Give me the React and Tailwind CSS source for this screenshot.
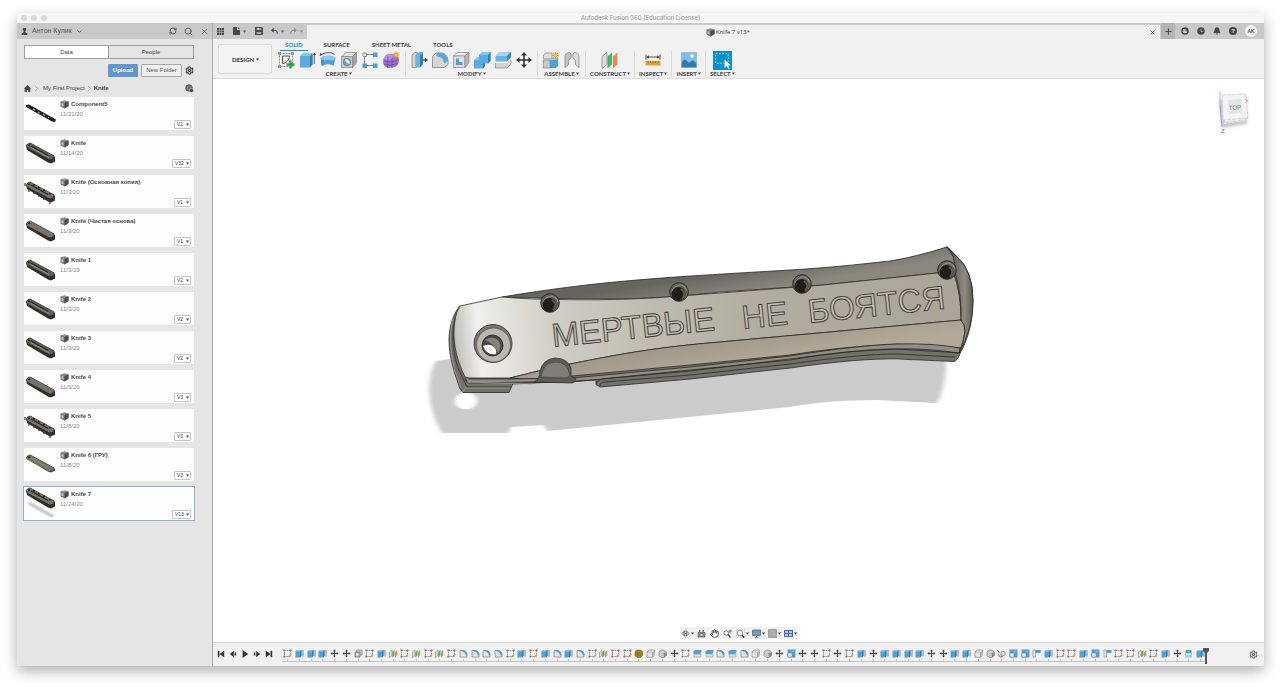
import React from "react";
import { Bell, ChevronDown, ChevronRight, Hand, Plus, RefreshCw, Search, Settings, X } from "lucide-react";

const Caret = ({ className = "" }) => (
  <svg viewBox="0 0 4 3" className={`h-[3px] w-[3px] shrink-0 ${className}`} aria-hidden="true">
    <path d="M0 0h4L2 3z" fill="currentColor" />
  </svg>
);

const Svg = ({ children, className = "size-[18px]", box = "0 0 18 18" }) => (
  <svg viewBox={box} className={`shrink-0 ${className}`} aria-hidden="true" fill="none">
    {children}
  </svg>
);

const Star = ({ x, y }) => (
  <g transform={`translate(${x} ${y})`} stroke="#f29a1f" strokeWidth="1.2">
    <path d="M0-3.6V3.6M-3.6 0H3.6M-2.4-2.4L2.4 2.4M-2.4 2.4L2.4-2.4" />
    <circle r="1.4" fill="#ffc34d" stroke="none" />
  </g>
);

const MovePath = () => (
  <>
    <path d="M9 3v12M3 9h12" stroke="#333" strokeWidth="1.6" />
    <path d="M9 1l3 3.6H6zM9 17l3-3.6H6zM1 9l3.6-3v6zM17 9l-3.6-3v6z" fill="#333" />
  </>
);

/* Toolbar drawings */
const tools = {
  sketch: (
    <Svg>
      <path d="M2.5 2.5h13v13h-13z" stroke="#8a8a8a" strokeDasharray="2 1" />
      <path d="M1 1h3v3H1zM14 1h3v3h-3zM1 14h3v3H1z" fill="#999" />
      <path d="M5.5 5h7c0 4-3 7-7 7.500z" stroke="#444" strokeWidth=".9" />
      <path d="M13.500 9.500v8M9.500 13.500h8" stroke="#2ea043" strokeWidth="2.400" />
    </Svg>
  ),
  extrude: (
    <Svg>
      <path d="M13 3.500h2.500v9L13 16z" fill="#b5b5b5" />
      <path d="M2 5l3-3h9.500L12 5z" fill="#8cc6ee" />
      <path d="M2 5h10v11.500H2z" fill="#5aa9e0" />
      <path d="M12 5l2.500-3v11L12 16.500z" fill="#2f7fb8" />
      <path d="M16.500 4v9" stroke="#555" strokeWidth=".8" />
      <path d="M16.500 1.500l1.300 2.500h-2.600z" fill="#333" />
    </Svg>
  ),
  revolve: (
    <Svg>
      <path d="M1.500 7C4 3.500 14 3.500 16.500 7l-2 8c-3-2.500-8-2.500-11 0z" fill="#4f9fd8" />
      <path d="M1.500 7C4 3.500 14 3.500 16.500 7c-1 2-3 2.500-4 2.500-2-1-5-1-7 0-2 0-3.500-1-4-2.500z" fill="#8cc6ee" />
      <path d="M2 11.500c0-2 1-3 3-2.500l-1.500 6c-1-.5-1.500-2-1.500-3.500z" fill="#3a86bd" />
      <path d="M2 4C5 1 13 1 15.500 3.500" stroke="#444" strokeWidth=".9" />
      <path d="M0.500 5l1-3 2 1.800z" fill="#333" />
    </Svg>
  ),
  hole: (
    <Svg>
      <path d="M1.500 5.500L6 1.500h10.500l-4 4z" fill="#e2e2e2" stroke="#888" strokeWidth=".7" />
      <path d="M1.500 5.500h11v11h-11z" fill="#c9c9c9" stroke="#888" strokeWidth=".7" />
      <path d="M12.500 5.500l4-4v10.500l-4 4.500z" fill="#a4a4a4" stroke="#888" strokeWidth=".7" />
      <circle cx="7" cy="11" r="3.800" fill="#5aa9e0" stroke="#777" strokeWidth=".7" />
      <path d="M5 8.500a3.500 3.500 0 0 1 4.500 4.500A6 6 0 0 1 5 8.500z" fill="#e9e9e9" />
    </Svg>
  ),
  pattern: (
    <Svg>
      <path d="M5 3.500h7M3.500 5v8M5 14.500h7" stroke="#777" strokeWidth=".9" />
      <path d="M2 2h3.500v3.500H2z" fill="#f4f4f4" stroke="#777" strokeWidth=".8" />
      <path d="M12 1.500h4.500V6H12zM12 12.500h4.500V17H12zM1.500 12.500H6V17H1.500z" fill="#4f9fd8" />
    </Svg>
  ),
  form: (
    <Svg>
      <path d="M1.500 8q1-4 5-5l6 0q4 1 4.500 6 0 5-4 7l-6 1q-5-1-6-5z" fill="#9b6fd0" />
      <path d="M1.500 8q1-4 5-5l6 0-3 5q-4 1.500-8 0z" fill="#b795e2" />
      <path d="M6 5l-.5 12M10 7.500V17M1.500 9.500c4 2 11 2 14.500-1M2 13c4 1.500 10 1.500 14-1" stroke="#6f45a3" strokeWidth=".7" />
      <Star x={14} y={4} />
    </Svg>
  ),
  pressPull: (
    <Svg>
      <path d="M2 4l3-2.500h3L6 4v12.500H2z" fill="#d5d5d5" stroke="#777" strokeWidth=".7" />
      <path d="M6 4l3-3h4l-3 3v12.500H6z" fill="#68b3e8" />
      <path d="M10 4l3-3v12l-3 3.500z" fill="#2f7fb8" />
      <path d="M12.500 9H15" stroke="#333" />
      <path d="M18 9l-3-2v4z" fill="#333" />
    </Svg>
  ),
  fillet: (
    <Svg>
      <path d="M1.500 5.500L5 2h5c4 0 7 4 7 8v3.500l-4 3H1.500z" fill="#d6d6d6" stroke="#888" strokeWidth=".8" />
      <path d="M5 2h5c4 0 7 4 7 8l-4 2.500c0-4-3-7-7-7z" fill="#5aa9e0" />
    </Svg>
  ),
  shell: (
    <Svg>
      <path d="M1.500 5L5 1.500h12L13 5z" fill="#eee" stroke="#888" strokeWidth=".7" />
      <path d="M1.500 5H13v11.500H1.500z" fill="#dedede" stroke="#888" strokeWidth=".7" />
      <path d="M13 5l4-3.500V12l-4 4.500z" fill="#b6b6b6" stroke="#888" strokeWidth=".7" />
      <path d="M4 7.500h6.500V14H4z" fill="#4f9fd8" />
      <path d="M7 7.500h3.500V11H7z" fill="#fff" />
    </Svg>
  ),
  combine: (
    <Svg>
      <path d="M6 4l3-3h8.500v9L15 12.500h-3V15l-2 2.500H1V9l3-2.500h2z" fill="#5aa9e0" />
      <path d="M6 4l3-3h8.500L15 4zM1 9l3-2.500h2V9z" fill="#8cc6ee" />
      <path d="M15 4l2.500-3v9L15 12.500zM10 12.500h2V15l-2 2.500z" fill="#2f7fb8" />
    </Svg>
  ),
  split: (
    <Svg>
      <path d="M1.500 12l3-3h12.500v4l-4 4H1.500z" fill="#d3d3d3" stroke="#888" strokeWidth=".7" />
      <path d="M1.500 5l4-4H17v5l-4 4.500H1.500z" fill="#68b3e8" />
      <path d="M1.500 5l4-4H17l-4 4z" fill="#a3d3f3" />
      <path d="M13 5l4-4v5l-4 4.500z" fill="#3a86bd" />
      <path d="M1 11.300h12L17.500 7" stroke="#fff" strokeWidth="1.200" />
    </Svg>
  ),
  move: <Svg><MovePath /></Svg>,
  component: (
    <Svg>
      <path d="M1.500 4L4 2h6v6H1.500z" fill="#ddd" stroke="#888" strokeWidth=".7" />
      <path d="M1.500 9H8v8H1.500z" fill="#c9c9c9" stroke="#888" strokeWidth=".7" />
      <path d="M8 9l2-2h6v8l-2 2H8z" fill="#4f9fd8" />
      <path d="M8 9l2-2h6l-2 2z" fill="#8cc6ee" />
      <Star x={13.500} y={4.500} />
    </Svg>
  ),
  joint: (
    <Svg>
      <path d="M2 6c0-3 2-4.500 4-4.500S8.500 4 8 7L5.500 9v4.500L2 16.500z" fill="#c3c3c3" stroke="#888" strokeWidth=".8" />
      <path d="M16 6c0-3-2-4.500-4-4.500S9.500 4 10 7l2.500 2v4.500l3.500 3z" fill="#dcdcdc" stroke="#888" strokeWidth=".8" />
    </Svg>
  ),
  plane: (
    <Svg>
      <path d="M1 5.500l5-4v12l-5 4z" fill="#ddd" stroke="#888" strokeWidth=".8" />
      <path d="M6.500 5.500l4.500-4v12l-4.500 4z" fill="#3fb56c" />
      <path d="M12 5.500l4.500-4v12l-4.500 4z" fill="#e58b52" />
    </Svg>
  ),
  measure: (
    <Svg>
      <path d="M2 3.500v5M16 3.500v5M3 6h12" stroke="#444" strokeWidth=".9" />
      <path d="M2 6l3-1.500v3zM16 6l-3-1.500v3z" fill="#444" />
      <path d="M1.500 10h15v4.500h-15z" fill="#e3a22d" />
      <path d="M4 10v2M6.500 10v2M9 10v2M11.500 10v2M14 10v2" stroke="#8a5d0c" strokeWidth=".7" />
    </Svg>
  ),
  insert: (
    <Svg>
      <path d="M1.500 1.500h15v15h-15z" fill="#7fbdea" />
      <path d="M1.500 12c2-4 4-4 6-1.500 2 3 3-1 5-1 2 .5 2.500 2 4 3v4h-15z" fill="#2c7ab0" />
      <circle cx="12" cy="5" r="1.800" fill="#f6fbff" />
      <path d="M1.500 1.500h15v15h-15z" stroke="#8aa" strokeWidth=".6" />
    </Svg>
  ),
  select: (
    <Svg className="size-[19px]">
      <path d="M0 0h18v18H0z" fill="#0a8fd0" />
      <path d="M2.500 2.500h12v9h-12z" stroke="#9ed08e" strokeDasharray="2 1" strokeWidth=".9" />
      <path d="M11 8v8l2-1.700 1.300 2.700 1.300-.7-1.300-2.500h2.700z" fill="#fff" />
    </Svg>
  ),
};

/* Timeline drawings, one per feature kind */
const features = {
  s: (
    <>
      <path d="M3 3h12v12H3z" stroke="#7c7c7c" strokeDasharray="3 1.200" strokeWidth="1.500" />
      <path d="M1 1h3.500v3.500H1zM13.500 1H17v3.500h-3.500zM1 13.500h3.500V17H1z" fill="#777" />
      <path d="M9.500 16.500l5.500-6.500 2.500 2-6 5z" fill="#f08a3c" />
    </>
  ),
  e: (
    <>
      <path d="M1 5l3-3h9v11l-3 4H1z" fill="#4f9fd8" />
      <path d="M1 5l3-3h9l-3 3z" fill="#8cc6ee" />
      <path d="M13 2v11l-3 4V5z" fill="#2f7fb8" />
      <path d="M16 2v13" stroke="#777" strokeWidth="1.800" />
    </>
  ),
  m: <MovePath />,
  k: (
    <>
      <path d="M5 2h11v10H5z" fill="#cfd6da" stroke="#777" strokeWidth="1.300" />
      <path d="M2 6h10v10H2z" fill="#a8b7c0" stroke="#666" strokeWidth="1.300" />
      <path d="M5 9h4v4H5z" fill="#fff" />
    </>
  ),
  p: (
    <>
      <path d="M1 6l5-4v11l-5 4z" fill="#ddd" stroke="#777" />
      <path d="M6.500 6L11 2v11l-4.500 4z" fill="#3fb56c" />
      <path d="M12 6l4.500-4v11L12 17z" fill="#e58b52" />
    </>
  ),
  f: (
    <>
      <path d="M2 3h6c5 0 8 4 8 8v5H2z" fill="#e4e4e4" stroke="#777" strokeWidth="1.300" />
      <path d="M5 2c7 0 11 4 12 10l-3.500 1C13 8 10 5 5 5z" fill="#4f9fd8" />
    </>
  ),
  g: (
    <>
      <path d="M2 5l4-3h7l4 3v8l-4 4H6l-4-4z" fill="#a98a2c" stroke="#6e5918" />
      <path d="M2 8h15M2 12h15M7 3v14M12 3v14" stroke="#7c651c" />
    </>
  ),
  b: (
    <>
      <path d="M2 6l4-4h11v10l-4 4.500H2z" fill="#e6e6e6" stroke="#777" strokeWidth="1.200" />
      <path d="M13 6l4-4v10l-4 4.500z" fill="#bbb" />
      <path d="M2 6h11v10" stroke="#888" />
    </>
  ),
  r: (
    <>
      <path d="M2 7c1-4 4-5 7-5s7 2 8 5v6l-5 4H6l-4-4z" fill="#c6c9cd" stroke="#777" strokeWidth="1.200" />
      <path d="M11 8l6-1v6l-5 4z" fill="#85898e" />
    </>
  ),
  t: (
    <>
      <path d="M2 10h14v6H2z" fill="#ddd" stroke="#888" />
      <path d="M1 5l3-3h13v4l-3 3H1z" fill="#4f9fd8" />
      <path d="M1 9h14" stroke="#2f7fb8" />
    </>
  ),
  c: (
    <>
      <path d="M1 1h16v16H1z" fill="#4f9fd8" />
      <path d="M2 8h8v8H2z" fill="#e9e9e9" stroke="#777" />
      <path d="M10 7l4-4" stroke="#fff" strokeWidth="1.200" />
    </>
  ),
  l: (
    <>
      <path d="M2 2h5v14H2z" fill="#f1f1f1" stroke="#777" strokeWidth="1.200" />
      <path d="M7 2h10v6H7z" fill="#4f9fd8" />
    </>
  ),
  x: (
    <>
      <circle cx="12" cy="9" r="4.500" fill="#e4e4e4" stroke="#777" strokeWidth="1.300" />
      <path d="M4 10l5 2v4H5l-3-3z" fill="#ddd" stroke="#888" />
      <path d="M1 2l4 6M3 13q4 5 8 2" stroke="#dc4453" strokeWidth="2" />
    </>
  ),
  d: (
    <>
      <path d="M3 2h12v6H3z" fill="#4f9fd8" />
      <path d="M3 8h12v8H3z" fill="#e9f2f8" stroke="#6d9fc2" />
      <path d="M3 12h12v4H3z" fill="#a8cde8" />
    </>
  ),
};

const timeline =
  "seeemmkseps" + "pspsffffsesefe" + "fspssgbrmsttftfbrmcmmsms" + "emeeee" + "mmeebrxccle" + "sseclsspsemde";

const toolGroups = [
  { name: "CREATE", pad: "px-[5px]", icons: ["sketch", "extrude", "revolve", "hole", "pattern", "form"] },
  { name: "MODIFY", pad: "px-1", icons: ["pressPull", "fillet", "shell", "combine", "split", "move"] },
  { name: "ASSEMBLE", pad: "px-1", icons: ["component", "joint"] },
  { name: "CONSTRUCT", pad: "px-1", icons: ["plane"] },
  { name: "INSPECT", pad: "px-1", icons: ["measure"] },
  { name: "INSERT", pad: "px-1", icons: ["insert"] },
  { name: "SELECT", pad: "px-1", icons: ["select"] },
];

const files = [
  { name: "Component5", date: "11/21/20", version: "V2", kind: "blade" },
  { name: "Knife", date: "11/14/20", version: "V32", kind: "slots" },
  { name: "Knife (Основная копия)", date: "11/3/20", version: "V1", kind: "pegs" },
  { name: "Knife (Чистая основа)", date: "11/3/20", version: "V1", kind: "plain" },
  { name: "Knife 1", date: "11/3/20", version: "V2", kind: "slots" },
  { name: "Knife 2", date: "11/3/20", version: "V2", kind: "slots" },
  { name: "Knife 3", date: "11/3/20", version: "V2", kind: "slots" },
  { name: "Knife 4", date: "11/3/20", version: "V3", kind: "plain" },
  { name: "Knife 5", date: "11/8/20", version: "V3", kind: "pegs" },
  { name: "Knife 6 (ГРУ)", date: "11/8/20", version: "V3", kind: "thin" },
  { name: "Knife 7", date: "11/24/20", version: "V13", kind: "shadow", selected: true },
];

const Thumb = ({ kind }) => {
  if (kind === "blade") {
    return (
      <Svg className="h-8 w-[33px]" box="0 0 33 32">
        <path d="M2 8l3-.5 27 15-1 2.500-3-.5L2 10z" fill="#23211e" />
        <path d="M9 12l2 1M14 15l1.500 1M19 17.500l2 1M24 20.500l1 .5" stroke="#c9b98a" strokeWidth="1.200" />
      </Svg>
    );
  }
  const up = kind === "shadow" ? -6 : 0;
  const depth = kind === "thin" ? 2 : 5;
  return (
    <Svg className="h-8 w-[33px]" box="0 0 33 32">
      {kind === "shadow" && <path d="M4 16l3-1 23 13-1 2-3 0L5 18z" fill="#cfcfcf" />}
      <g transform={`translate(0 ${up})`}>
        <path d={`M2 10l1-2 3-1.500L30 19.500l1 2v${depth - 1}l-4 2-3-1L3 ${9 + depth}z`} fill="#2f2e2a" />
        <path d="M2.500 9.500l3.500-2.500 24 13-1.500 3-3 .5L3 11.500z" fill={kind === "slots" ? "#625f56" : "#77736a"} />
        {kind !== "plain" && <path d="M7 10l17 9.500" stroke={kind === "thin" ? "#8d897d" : "#24231f"} strokeWidth="1.400" />}
        {kind === "slots" && <path d="M7 11.500l18 10" stroke="#b5b1a3" strokeWidth=".7" />}
        <circle cx="5" cy="9.300" r="1" fill="#1d1c1a" />
        {(kind === "pegs" || kind === "shadow") && (
          <path d="M10 9v1.500M15 12v1.500M20 14.500V16M26 18v1.500" stroke="#111" strokeWidth="1.500" />
        )}
        {kind === "pegs" && <path d="M1 8v3M5 14v3M10 16v3M15 19v3M20 22v3M26 25v4" stroke="#3a3934" strokeWidth="1.200" />}
      </g>
    </Svg>
  );
};

const Cube = ({ className = "size-[9px]" }) => (
  <Svg className={className}>
    <path d="M1 3l8-2 8 2v9l-8 5-8-4z" fill="#777" />
    <path d="M1 3l8-2 8 2-8 3z" fill="#8f8f8f" />
    <path d="M9 6l8-3v9l-8 5z" fill="#4c4c4c" />
    <path d="M3 6l4 1v6l-4-1.500z" fill="#c0c0c0" />
  </Svg>
);

const FileCard = ({ file }) => (
  <li
    className={`flex h-[33px] items-start bg-[#fdfdfd] ${
      file.selected ? "outline outline-1 outline-[#8fafd3]" : ""
    }`}
  >
    <Thumb kind={file.kind} />
    <div className="ml-[3px] flex min-w-0 flex-1 flex-col pt-0.5">
      <a href="#file" className="flex items-center gap-0.5 text-[6px] leading-[10px] font-bold text-[#4a4a4a]">
        <Cube />
        {file.name}
      </a>
      <span className="text-[6px] leading-[10px] text-[#8a8a8a]">{file.date}</span>
    </div>
    <span className="relative mr-[3px] mb-px flex self-end text-[#444]">
      <select
        aria-label={`Version of ${file.name}`}
        className="h-[9px] appearance-none rounded-[1px] border border-[#c4c4c4] bg-white pr-[6px] pl-0.5 text-[5px] leading-[7px]"
      >
        <option>{file.version}</option>
      </select>
      <Caret className="pointer-events-none absolute top-[3px] right-0.5" />
    </span>
  </li>
);

const Sidebar = () => (
  <aside className="flex w-[196px] shrink-0 flex-col border-r border-[#ababab] bg-[#e5e5e5]">
    <header className="flex h-4 items-center bg-[#c9c9c9] pr-[3px] pl-1 text-[#555]">
      <Svg className="size-[7px]" box="0 0 10 10">
        <path d="M5 0a2 2 0 0 1 1 4l1 3h2v3H1V7h2l1-3A2 2 0 0 1 5 0z" fill="#444" />
      </Svg>
      <button className="ml-1 flex items-center gap-1 text-[7px] leading-4">
        Антон Кулик
        <ChevronDown className="size-[7px]" strokeWidth={3} />
      </button>
      <div className="ml-auto flex items-center gap-[7px]">
        <button aria-label="Refresh"><RefreshCw className="block size-2" strokeWidth={3} /></button>
        <button aria-label="Search"><Search className="block size-[9px]" strokeWidth={2.500} /></button>
        <button aria-label="Close panel"><X className="block size-[9px]" strokeWidth={2} /></button>
      </div>
    </header>
    <div className="flex flex-1 flex-col pt-1.5 pr-[18px] pl-[7px]">
      <div className="grid h-[14px] grid-cols-2 border border-[#9f9f9f] text-[6px] text-[#444]">
        <button className="border-r border-[#9f9f9f] bg-white">Data</button>
        <button>People</button>
      </div>
      <div className="mt-[5px] flex items-center justify-end text-[6px]">
        <button className="h-[13px] w-[30px] rounded-[1px] bg-[#6595c9] font-bold text-white">Upload</button>
        <button className="ml-[3px] h-[13px] w-[41px] rounded-[1px] border border-[#a9a9a9] bg-[#eee] text-[#555]">New Folder</button>
        <button aria-label="Panel settings" className="ml-[3px] text-[#444]">
          <Settings className="block size-[9px]" strokeWidth={3} />
        </button>
      </div>
      <nav className="flex h-5 items-center pt-[3px] text-[6px] text-[#444]">
        <a href="#home" aria-label="Home">
          <Svg className="size-[7px]" box="0 0 10 10">
            <path d="M5 0l5 5H9v5H6V7H4v3H1V5H0z" fill="#444" />
          </Svg>
        </a>
        <ChevronRight className="mx-px size-[9px] text-[#999]" strokeWidth={2} />
        <a href="#project" className="ml-px">My First Project</a>
        <ChevronRight className="size-[9px] text-[#999]" strokeWidth={2} />
        <a href="#knife" className="font-bold">Knife</a>
        <button aria-label="Open on the web" className="ml-auto">
          <Svg className="size-[9px]">
            <circle cx="8" cy="8" r="6.500" fill="#8a8a8a" stroke="#444" strokeWidth="1.600" />
            <path d="M1 8h14M8 1v14M3 4h10M3 12h8" stroke="#555" />
            <path d="M9 11l4-2 4 2v4l-4 2-4-2z" fill="#444" stroke="#e5e5e5" />
          </Svg>
        </button>
      </nav>
      <ul className="flex flex-col gap-1.5">
        {files.map((f) => (
          <FileCard key={f.name} file={f} />
        ))}
      </ul>
    </div>
  </aside>
);

const TopBar = () => (
  <div className="flex h-4 items-stretch bg-[#c9c9c9] text-[#4a4a4a]">
    <div className="flex w-[94px] shrink-0 items-center pl-1">
      <button aria-label="Data panel">
        <Svg className="block size-[7px]" box="0 0 11 11">
          <path d="M0 0h3v3H0zM4 0h3v3H4zM8 0h3v3H8zM0 4h3v3H0zM4 4h3v3H4zM8 4h3v3H8zM0 8h3v3H0zM4 8h3v3H4zM8 8h3v3H8z" fill="#444" />
        </Svg>
      </button>
      <button aria-label="File" className="ml-[9px] flex items-center gap-[3px]">
        <Svg className="h-2 w-[7px]" box="0 0 7 8">
          <path d="M0 0h4v3h3v5H0zM5 0l2 2H5z" fill="#4a4a4a" />
        </Svg>
        <Caret />
      </button>
      <button aria-label="Save" className="ml-[9px]">
        <Svg className="block size-2" box="0 0 9 9">
          <path d="M0 0h8l1 1v8H0z" fill="#4a4a4a" />
          <path d="M2 1h5v2.500H2zM2 5.500h5V8H2z" fill="#c9c9c9" />
          <path d="M3 6.700h3M5.500 1v2" stroke="#4a4a4a" strokeWidth=".8" />
        </Svg>
      </button>
      <button aria-label="Undo" className="ml-2 flex items-center gap-[3px]">
        <Svg className="h-2 w-[7px]" box="0 0 10 10">
          <path d="M2 4h3c3 0 4 2 4 5" stroke="#4a4a4a" strokeWidth="1.600" />
          <path d="M0 4l4-3.500v7z" fill="#4a4a4a" />
        </Svg>
        <Caret />
      </button>
      <button aria-label="Redo" className="ml-1.5 flex items-center gap-[3px] text-[#888]">
        <Svg className="h-2 w-[7px]" box="0 0 10 10">
          <path d="M8 4H5C2 4 1 6 1 9" stroke="#888" strokeWidth="1.400" />
          <path d="M10 4L6 .5v7z" fill="#888" />
        </Svg>
        <Caret />
      </button>
    </div>
    <div className="mt-0.5 flex flex-1 items-center bg-[#f1f1f1] pr-1">
      <span className="flex flex-1 items-center justify-center gap-px font-['Open_Sans',sans-serif] text-[6px] font-medium text-[#333]">
        <Cube className="size-[9px]" />
        Knife 7 v13*
      </span>
      <button aria-label="Close tab"><X className="block size-[7px]" strokeWidth={2.500} /></button>
    </div>
    <button aria-label="New tab" className="ml-px flex w-[14px] items-center justify-center bg-[#b4b4b4]">
      <Plus className="size-[9px]" strokeWidth={3} />
    </button>
    <div className="flex items-center gap-2 pr-[7px] pl-1.5">
      <button aria-label="Extensions">
        <Svg className="block size-2">
          <circle cx="9" cy="9" r="7" stroke="#444" strokeWidth="3" />
          <path d="M4 2l9 0 3 8-5 0z" fill="#444" />
          <path d="M5 6l6 0 0 5" stroke="#ddd" strokeWidth="1.600" />
        </Svg>
      </button>
      <button aria-label="Job status">
        <Svg className="block size-2">
          <circle cx="9" cy="9" r="8.500" fill="#4a4a4a" />
          <path d="M9 4v6h5" stroke="#c9c9c9" strokeWidth="1.600" />
        </Svg>
      </button>
      <button aria-label="Notifications"><Bell className="block size-2" fill="#444" strokeWidth={3} /></button>
      <button aria-label="Help" className="flex size-2 items-center justify-center rounded-full bg-[#444] text-[6px] leading-none font-bold text-[#eee]">?</button>
      <button aria-label="Account" className="flex size-3 items-center justify-center rounded-full bg-[#f1f1f1] text-[5px] leading-none font-bold text-[#555]">AK</button>
    </div>
  </div>
);

const tabs = ["SOLID", "SURFACE", "SHEET METAL", "TOOLS"];

const Ribbon = () => (
  <div className="flex h-10 items-start border-b border-[#dcdcdc] bg-[#f1f1f1] pl-[5px] font-['Lato',sans-serif] text-[6px] font-bold text-[#444]">
    <span className="relative mt-[5px] flex">
      <select
        aria-label="Workspace"
        className="h-[30px] w-[54px] appearance-none rounded-[2px] border border-[#dadada] bg-[#f3f3f3] pl-[13px] font-black"
      >
        <option>DESIGN</option>
      </select>
      <Caret className="pointer-events-none absolute top-[14px] right-[13px]" />
    </span>
    <div className="flex flex-col">
      <div className="ml-2 flex h-3 items-stretch gap-[22px]">
        {tabs.map((t, i) => (
          <button
            key={t}
            className={
              i === 0
                ? "-mr-[6px] border-b border-[#0696d7] px-[5px] pb-px text-[#0696d7]"
                : "border-b border-transparent pb-px"
            }
          >
            {t}
          </button>
        ))}
      </div>
      <div className="flex">
        {toolGroups.map((g, i) => (
          <div
            key={g.name}
            className={`flex flex-col items-center ${g.pad} ${i < toolGroups.length - 1 ? "border-r border-[#dcdcdc]" : ""}`}
          >
            <div className="flex h-[18px] items-center gap-[3px]">
              {g.icons.map((n) => (
                <button key={n} aria-label={n}>{tools[n]}</button>
              ))}
            </div>
            <button className="flex h-2 items-center gap-px pt-px leading-[8px] whitespace-nowrap">
              {g.name}
              <Caret />
            </button>
          </div>
        ))}
      </div>
    </div>
  </div>
);

const screws = [
  [550, 303],
  [679, 292],
  [802, 284],
  [947, 270],
];

const Model = () => (
  <svg viewBox="213 79 1051 563" className="block w-full" role="img" aria-label="Knife handle model">
    <defs>
      <linearGradient id="face" gradientUnits="userSpaceOnUse" x1="454" y1="350" x2="962" y2="300">
        <stop offset="0" stopColor="#bdbbb5" />
        <stop offset=".05" stopColor="#f1f0ee" />
        <stop offset=".1" stopColor="#e6e4df" />
        <stop offset=".2" stopColor="#d0cdc5" />
        <stop offset=".4" stopColor="#bfbbb0" />
        <stop offset=".6" stopColor="#b1ada1" />
        <stop offset="1" stopColor="#aaa598" />
      </linearGradient>
      <linearGradient id="upper" gradientUnits="userSpaceOnUse" x1="720" y1="272" x2="724" y2="296">
        <stop offset="0" stopColor="#66645e" />
        <stop offset="1" stopColor="#8a877f" />
      </linearGradient>
      <linearGradient id="tan" gradientUnits="userSpaceOnUse" x1="740" y1="338" x2="744" y2="364">
        <stop offset="0" stopColor="#a1998b" />
        <stop offset="1" stopColor="#b4a998" />
      </linearGradient>
      <linearGradient id="cap" gradientUnits="userSpaceOnUse" x1="952" y1="300" x2="973" y2="300">
        <stop offset="0" stopColor="#625f58" />
        <stop offset=".6" stopColor="#8d8a82" />
        <stop offset="1" stopColor="#5d5a54" />
      </linearGradient>
      <filter id="soft" x="-5%" y="-10%" width="110%" height="120%">
        <feGaussianBlur stdDeviation="2 0.5" />
      </filter>
    </defs>

    <g filter="url(#soft)">
      <path d="M436 361l80-12 430 12v8q-2 22-9 34-40-2-60-3-50 0-87 7L547 431l-3-6-33 2-3 6h-66q-12-20-13-43 1-20 7-29z" fill="#cbcbcb" />
      <ellipse cx="466" cy="401" rx="11" ry="8.500" fill="#fff" />
    </g>

    <g stroke="#2b2a27" strokeWidth=".8" strokeLinejoin="round">
      <path d="M460 306c-6 6-11 20-11 34 0 18 6 34 11 49l3 3.500h46l4-9 83-4v5l4 2.500 90-8 100-11q70-10 107-9l58 2.500q4-4 5-8l4-8q9-20 9-45 0-30-16-44l-10-10L902 320 640 340 480 330z" fill="#74716b" />
      <path d="M456 316c-5 12-4 35 2 52l9 19h44" fill="none" />
      <path d="M453 319c-4 14-3 35 2 52l6 17" fill="none" stroke="#aaa79f" />
      <path d="M502 297C550 289 590 284 637 280S740 273 790 270S870 263 890 261Q915 257 947 247l8 12-2 13-16 1-114 12-103 7q-60 7-113 7t-105-2z" fill="url(#upper)" />
      <path d="M460 306l42-9q24 2 38 2 60 2 113-1l67-5 103-8 114-12 16-1q8 20 8 48l-241 22c-60 5-95 11-150 22-20 4-44 10-60 14h-41l-4-1c-10-20-13-40-10-57q1-8 5-14z" fill="url(#face)" />
      <path d="M510 378c16-4 40-10 60-14 55-11 90-17 150-22l241-22q4 5 4 11-1 8-4 17-30-4-64-4-60 3-107 11l-100 10-118 11q-40 4-62 2z" fill="url(#tan)" />
      <path d="M947 247q8 6 8 25 7 24 6 48 4 5 4 10 0 8-6 23 14-24 14-52 0-30-16-44z" fill="url(#cap)" />
      <path d="M469 379h41l62-1 118-11 100-11q70-11 107-12t63 4l-1 5q-35-5-62-4-50 1-107 11l-100 10-118 12h-37l-66 1q-3-1-4-4" fill="#918e86" />
      <path d="M465 378l3 5M513 384l83-4M596 384q1-4 6-5l88-8 100-12q70-10 107-10l63 4M600 386q0-4 5-4l85-7 100-11q70-10 107-10l58 3" fill="none" />
      <path d="M463 392l2-4h45M467 382l65 2" fill="none" stroke="#a5a299" />
    </g>

    <path d="M534 382q6-3 6-11 3-12 15-13 12 0 16 10v8l5 3-3 4z" fill="#5d5b56" stroke="#2b2a27" strokeWidth=".7" />
    <path d="M541 377q2-15 14-15 12-1 15 13l-3 3z" fill="#817e77" stroke="#44423e" strokeWidth=".7" />

    <circle cx="493" cy="343.500" r="19" fill="#77746d" stroke="#33312d" strokeWidth=".8" />
    <circle cx="493.500" cy="345" r="17" fill="#bab7ae" stroke="#55524c" strokeWidth=".7" />
    <ellipse cx="492.500" cy="345.500" rx="10.500" ry="10.500" fill="#4b4843" stroke="#22211e" strokeWidth=".8" />
    <path d="M485 340q8-5 14 1 3 6-1 12-3-9-13-13z" fill="#85827a" />
    <path d="M483 346q7-3 11 1 3 3 2 7-9 2-13-8z" fill="#fff" />

    {screws.map(([x, y]) => (
      <g key={x}>
        <circle cx={x} cy={y} r="9.300" fill="#66635c" stroke="#22211e" strokeWidth=".9" />
        <path d={`M${x - 7} ${y - 1}q3-6 9-6 5 1 6 6`} fill="none" stroke="#a9a69d" strokeWidth=".8" />
        <circle cx={x - 0.5} cy={y + 2} r="7" fill="#1f1e1b" />
        <path d={`M${x + 2} ${y - 3}q6 4 1 10`} fill="none" stroke="#5e5b54" strokeWidth="2" />
      </g>
    ))}

    <g fontFamily="Liberation Sans, sans-serif" fontSize="33" fill="#c3bfb4" stroke="#3a3833" strokeWidth=".9">
      <text x="553" y="347" transform="rotate(-6 553 347)">МЕРТВЫЕ</text>
      <text x="743" y="329" transform="rotate(-6 743 329)">НЕ</text>
      <text x="809" y="323" transform="rotate(-6 809 323)">БОЯТСЯ</text>
    </g>
  </svg>
);

const ViewCube = () => (
  <svg viewBox="0 0 40 48" className="absolute top-2 right-[11px] h-12 w-10" role="img" aria-label="View cube">
    <defs>
      <filter id="cubeShadow" x="-30%" y="-30%" width="160%" height="160%">
        <feGaussianBlur stdDeviation="1.5" />
      </filter>
    </defs>
    <path d="M6 12l27 1 1 24-25 4z" fill="#c4c4c4" filter="url(#cubeShadow)" />
    <path d="M7 6v12" stroke="#7de27d" strokeWidth=".8" />
    <path d="M7 18l2 22" stroke="#8080d8" strokeWidth=".8" />
    <path d="M9 8l24-1 2 24-3 3-21 3z" fill="#ececec" />
    <path d="M9 8l24-1 2 24-25 2z" fill="#f3f3f3" stroke="#c8c8c8" strokeWidth=".7" strokeDasharray="4 1" />
    <path d="M11 33l1 3 20-3 3-3" fill="none" stroke="#c0c0c0" strokeWidth=".7" strokeDasharray="3 1" />
    <path d="M15 13l13-1 1 14-13 1z" fill="#e2e4e8" />
    <g fontFamily="Liberation Sans, sans-serif" fontSize="6">
      <text x="16" y="23" fill="#6f7682" transform="rotate(-3 16 23)">TOP</text>
      <text x="5" y="8" fill="#7de27d">Y</text>
      <text x="32" y="16" fill="#f07878">X</text>
      <text x="8" y="46" fill="#5a5ad0">Z</text>
    </g>
  </svg>
);

const navIcons = [
  {
    name: "Orbit",
    caret: true,
    art: (
      <>
        <ellipse cx="9" cy="9" rx="7" ry="3.500" stroke="#666" strokeWidth="1.500" />
        <ellipse cx="9" cy="9" rx="3" ry="7" stroke="#666" strokeWidth="1.500" />
        <path d="M7 9h4" stroke="#333" strokeWidth="1.500" />
      </>
    ),
  },
  {
    name: "Look at",
    art: (
      <>
        <path d="M2 7h14v9H2z" fill="#8d9299" stroke="#555" strokeWidth="1.300" />
        <path d="M4 2h3v4H4zM11 2h3v4h-3z" fill="#777" />
        <path d="M6 9h6v5H6z" fill="#ddd" stroke="#555" />
      </>
    ),
  },
  { name: "Pan" },
  {
    name: "Zoom",
    art: (
      <>
        <circle cx="6.500" cy="8" r="4.500" fill="#fff" stroke="#666" strokeWidth="1.500" />
        <path d="M10 11l5 6" stroke="#444" strokeWidth="2.500" />
        <path d="M14 1v7M11 4h7" stroke="#555" strokeWidth="1.500" />
      </>
    ),
  },
  {
    name: "Fit",
    caret: true,
    art: (
      <>
        <path d="M1 1h16v16H1z" stroke="#bbb" strokeDasharray="3 2" />
        <circle cx="8" cy="8" r="5.500" fill="#fff" stroke="#666" strokeWidth="1.500" />
        <path d="M12 12l4 5" stroke="#222" strokeWidth="2.800" />
      </>
    ),
  },
  {
    name: "Display settings",
    caret: true,
    art: (
      <>
        <path d="M1 2h16v11H1z" fill="#6f9bc8" stroke="#666" strokeWidth="1.600" />
        <path d="M9 13v3M5 16.500h8" stroke="#666" strokeWidth="2" />
      </>
    ),
  },
  {
    name: "Grid and snaps",
    caret: true,
    art: (
      <>
        <path d="M1 1h16v16H1z" fill="#a2a5a8" stroke="#777" />
        <path d="M1 6h16M1 11h16M6 1v16M11 1v16" stroke="#b4b4b4" />
      </>
    ),
  },
  {
    name: "Viewports",
    caret: true,
    art: (
      <>
        <path d="M0 2h18v14H0z" fill="#4a6e9c" />
        <path d="M2 4h6v4H2zM10 4h6v4h-6zM2 10h6v4H2zM10 10h6v4h-6z" fill="#a9c9ec" />
      </>
    ),
  },
];

const Viewport = () => (
  <main className="relative flex-1 bg-white">
    <Model />
    <ViewCube />
    <div className="absolute inset-x-0 bottom-[3px] flex justify-center">
      <div className="flex h-3 items-center gap-1 bg-[#f1f1f1] px-px text-[#333]">
        {navIcons.map((n) => (
          <button key={n.name} aria-label={n.name} className="flex items-center gap-px">
            {n.art ? <Svg className="size-[9px]">{n.art}</Svg> : <Hand className="size-[9px]" strokeWidth={2} />}
            {n.caret && <Caret className="-mr-px" />}
          </button>
        ))}
      </div>
    </div>
  </main>
);

const playback = [
  ["Go to start", "M1 1h2v8H1zM9 1v8L3 5z"],
  ["Step back", "M6 1v8L1 5zM7 3h2v4H7z"],
  ["Play", "M2 0l7 5-7 5z"],
  ["Step forward", "M4 1v8l5-4zM1 3h2v4H1z"],
  ["Go to end", "M7 1h2v8H7zM1 1v8l6-4z"],
];

const Timeline = () => (
  <footer className="flex h-6 items-start border-t border-[#d5d5d5] bg-[#f1f1f1] pt-[5px] pl-1">
    <div className="flex h-3 items-center gap-1">
      {playback.map(([name, d]) => (
        <button key={name} aria-label={name}>
          <Svg className="block size-2" box="0 0 10 10">
            <path d={d} fill="#333" />
          </Svg>
        </button>
      ))}
    </div>
    <div className="ml-[9px] flex max-w-[924px] flex-1 items-start pt-px">
      {timeline.split("").map((k, i) => (
        <button key={i} aria-label={`Feature ${i + 1}`} className="flex flex-1 flex-col items-center">
          <Svg className="size-[9px]">{features[k]}</Svg>
          <span className="mt-px h-0.5 w-px bg-[#c4c4c4]" />
          <span className="h-px w-full bg-[#c4c4c4]" />
        </button>
      ))}
    </div>
    <Svg className="-ml-[3px] h-4 w-[6px]" box="0 0 6 16">
      <path d="M0 0h6v3L4 5v11H2V5L0 3z" fill="#555" />
    </Svg>
    <button aria-label="Timeline settings" className="mt-0.5 mr-1.5 ml-auto text-[#777]">
      <Settings className="block size-[9px]" strokeWidth={3} />
    </button>
  </footer>
);

export default function App() {
  return (
    <div className="flex min-h-screen flex-col bg-white pt-[13px] pr-4 pb-[21px] pl-[17px] font-['Liberation_Sans',Arial,sans-serif]">
      <div className="flex flex-1 flex-col overflow-hidden rounded-[3px] bg-[#f6f6f6] shadow-[0_5px_14px_rgba(0,0,0,0.32)]">
        <div className="flex h-[10px] items-center">
          <div className="flex w-12 gap-1 pl-1">
            <button aria-label="Close window" className="size-1.5 rounded-full bg-[#d9d9d9]" />
            <button aria-label="Minimize window" className="size-1.5 rounded-full bg-[#d9d9d9]" />
            <button aria-label="Zoom window" className="size-1.5 rounded-full bg-[#d9d9d9]" />
          </div>
          <h1 className="flex-1 pr-12 text-center font-['Inter',sans-serif] text-[6px] leading-[10px] font-medium text-[#a0a0a0]">
            Autodesk Fusion 360 (Education License)
          </h1>
        </div>
        <div className="flex flex-1">
          <Sidebar />
          <div className="flex min-w-0 flex-1 flex-col">
            <TopBar />
            <Ribbon />
            <Viewport />
            <Timeline />
          </div>
        </div>
      </div>
    </div>
  );
}
